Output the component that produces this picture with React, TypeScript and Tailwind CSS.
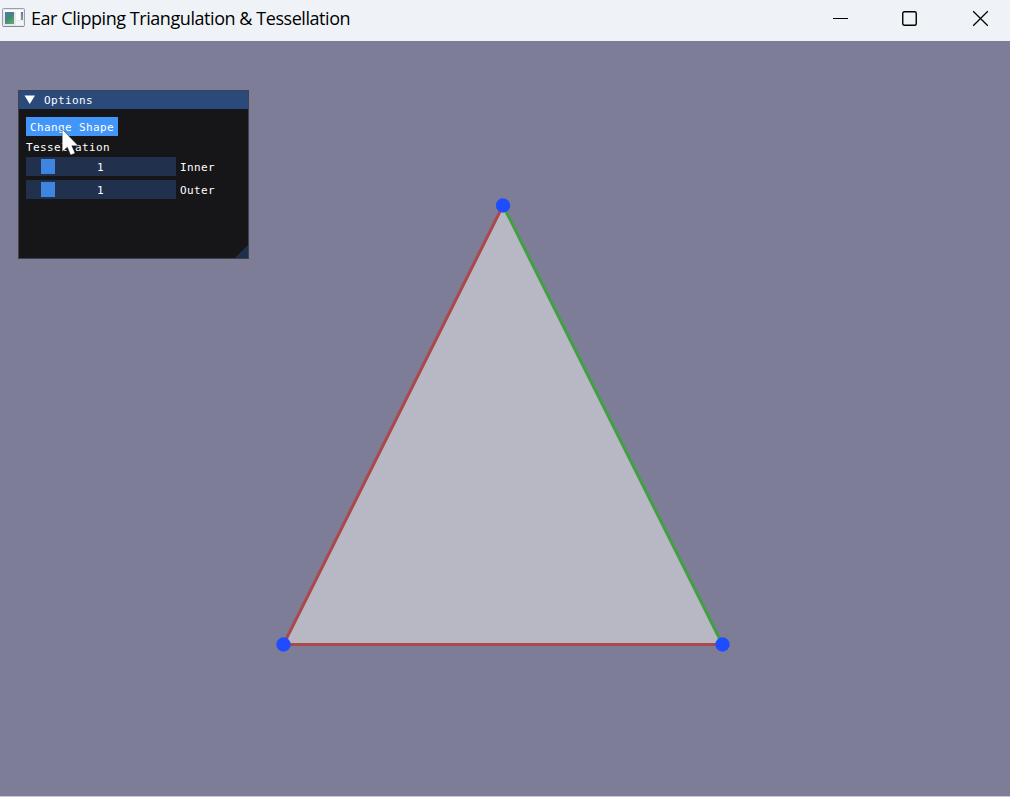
import React from "react";

function AppIcon() {
  return (
    <svg width="23" height="20" viewBox="0 0 23 20" className="shrink-0">
      <defs>
        <linearGradient id="picture" x1="0" y1="0" x2="0.6" y2="1">
          <stop offset="0" stopColor="#4f7fb0" />
          <stop offset="0.45" stopColor="#4a7f8c" />
          <stop offset="0.6" stopColor="#458f72" />
          <stop offset="1" stopColor="#5aa568" />
        </linearGradient>
        <linearGradient id="strip" x1="0" y1="0" x2="0" y2="1">
          <stop offset="0" stopColor="#6a77a8" />
          <stop offset="1" stopColor="#6fa590" />
        </linearGradient>
      </defs>
      <rect x="0.5" y="0.5" width="22" height="18" rx="1" fill="#e6e8ee" stroke="#9a9dab" />
      <path d="M1 18.5H22" stroke="#8088a4" />
      <rect x="2" y="2" width="19" height="2" fill="#fbfbfc" />
      <rect x="3" y="4" width="9" height="12" fill="url(#picture)" />
      <rect x="14" y="4" width="4" height="8" fill="#fcfcfd" />
      <rect x="19" y="4" width="2" height="8" fill="url(#strip)" />
      <rect x="14" y="13" width="7" height="4" fill="#f5f5f8" />
    </svg>
  );
}

function TitleBar() {
  return (
    <header className="flex h-[41px] shrink-0 items-start justify-between bg-[#eff3f8] text-black">
      <div className="flex items-start pl-[2px] pt-2">
        <AppIcon />
        <h1 className="ml-[6px] mt-[-4px] whitespace-nowrap font-['Open_Sans',sans-serif] text-[18px] leading-7 tracking-[-0.44px]">
          Ear Clipping Triangulation &amp; Tessellation
        </h1>
      </div>
      <div className="flex pr-[21px] pt-[10px]">
        <svg width="17" height="17" viewBox="0 0 17 17">
          <path d="M1 8.5H16" stroke="#000" />
        </svg>
        <svg width="17" height="17" viewBox="0 0 17 17" className="ml-[52px]">
          <rect x="1.75" y="1.75" width="13.5" height="13.5" rx="1.5" fill="none" stroke="#000" strokeWidth="1.4" />
        </svg>
        <svg width="17" height="17" viewBox="0 0 17 17" className="ml-[54px]">
          <path d="M1.2 1.2L15.8 15.8M15.8 1.2L1.2 15.8" stroke="#000" strokeWidth="1.3" />
        </svg>
      </div>
    </header>
  );
}

function Slider({ label, value }: { label: string; value: number }) {
  return (
    <div className="flex h-[19px] items-center">
      <div className="relative flex h-full w-[150px] items-center justify-center bg-[#20304d]">
        <div className="absolute left-[15px] top-[2px] h-[15px] w-[14px] bg-[#3d85e0]" />
        <span className="relative pr-px pt-[2px]">{value}</span>
      </div>
      <span className="ml-[4px] pt-[2px]">{label}</span>
    </div>
  );
}

function OptionsPanel() {
  return (
    <section className="absolute left-[18px] top-[49px] flex h-[169px] w-[231px] flex-col border border-[#41414b] bg-[#161618] font-['DejaVu_Sans_Mono',monospace] text-[11px] leading-[13px] tracking-[0.378px] text-white">
      <div className="flex h-[18px] shrink-0 items-center bg-[#294a7a] pl-[5px]">
        <svg width="12" height="10" viewBox="0 0 12 10">
          <path d="M0.5 0.5H11L5.75 9Z" fill="#fff" />
        </svg>
        <span className="ml-2">Options</span>
      </div>
      <div className="flex flex-col items-start pl-[7px] pt-2">
        <button className="h-[19px] w-[92px] whitespace-nowrap bg-[#4296fa] pl-1 pt-[2px] text-left">Change Shape</button>
        <span className="mb-[3px] mt-[5px]">Tessellation</span>
        <div className="flex flex-col gap-1">
          <Slider label="Inner" value={1} />
          <Slider label="Outer" value={1} />
        </div>
      </div>
      <svg width="13" height="13" viewBox="0 0 13 13" className="absolute bottom-0 right-0">
        <path d="M13 0V13H0Z" fill="#1c304a" />
      </svg>
    </section>
  );
}

function Cursor() {
  return (
    <svg width="20" height="30" viewBox="0 0 20 30" className="absolute left-[61px] top-[87px]">
      <path
        d="M1.2 1.2V23.8L6.3 19.2L9.6 27L14 25.2L10.8 17.8H17.2Z"
        fill="#fff"
        stroke="#111"
        strokeWidth="0.4"
      />
    </svg>
  );
}

export default function App() {
  return (
    <div className="flex h-[797px] w-[1010px] flex-col overflow-hidden">
      <TitleBar />
      <main className="relative h-[755px] shrink-0 bg-[#7e7d98]">
        <svg width="1010" height="755" viewBox="0 41 1010 755" className="block">
          <path d="M503 205.5L722.5 644.5H283.5Z" fill="#b8b8c4" />
          <g strokeWidth="3">
            <path d="M503 205.5L283.5 644.5" stroke="#ac474c" />
            <path d="M283.5 644.5H722.5" stroke="#ac474c" />
            <path d="M503 205.5L722.5 644.5" stroke="#40a041" />
          </g>
          <g fill="#1f4cff">
            <circle cx="503" cy="205.5" r="7.2" />
            <circle cx="283.5" cy="644.5" r="7.2" />
            <circle cx="722.5" cy="644.5" r="7.2" />
          </g>
        </svg>
        <OptionsPanel />
        <Cursor />
      </main>
      <div className="h-px bg-[#c5c6cf]" />
    </div>
  );
}
